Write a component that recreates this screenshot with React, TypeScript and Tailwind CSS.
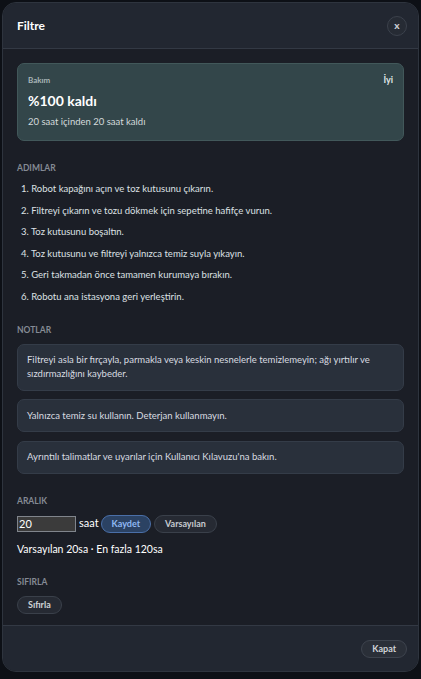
import React from "react";

const steps = [
  "Robot kapağını açın ve toz kutusunu çıkarın.",
  "Filtreyi çıkarın ve tozu dökmek için sepetine hafifçe vurun.",
  "Toz kutusunu boşaltın.",
  "Toz kutusunu ve filtreyi yalnızca temiz suyla yıkayın.",
  "Geri takmadan önce tamamen kurumaya bırakın.",
  "Robotu ana istasyona geri yerleştirin.",
];

const notes = [
  "Filtreyi asla bir fırçayla, parmakla veya keskin nesnelerle temizlemeyin; ağı yırtılır ve sızdırmazlığını kaybeder.",
  "Yalnızca temiz su kullanın. Deterjan kullanmayın.",
  "Ayrıntılı talimatlar ve uyarılar için Kullanıcı Kılavuzu'na bakın.",
];

function SectionLabel({ children }: { children: React.ReactNode }) {
  return (
    <div className="text-[8.5px] font-bold uppercase leading-[12px] text-[#858b94]">
      {children}
    </div>
  );
}

function PillButton({
  children,
  className = "",
}: {
  children: React.ReactNode;
  className?: string;
}) {
  return (
    <button
      className={
        "flex h-[18px] items-center rounded-full border px-[10px] text-[9px] font-bold leading-none " +
        className
      }
    >
      {children}
    </button>
  );
}

export default function App() {
  return (
    <div
      className="h-[679px] w-[421px] overflow-hidden bg-[#0d1016] px-[2px] pt-[2px]"
      style={{ fontFamily: 'Lato, "Noto Sans", sans-serif' }}
    >
      <div className="flex h-[670px] flex-col overflow-hidden rounded-[14px] border border-[#2e343e] bg-[#1b1e26] text-[#e6e8eb]">
        {/* header */}
        <div className="flex h-[46px] shrink-0 items-center justify-between border-b border-[#333944] bg-[#222731] pl-[14px] pr-[11px]">
          <div className="text-[12px] font-bold text-white">Filtre</div>
          <button className="flex h-[20px] w-[20px] items-center justify-center rounded-full border border-[#3c424c] bg-[#262b34] pb-[1px] text-[10px] font-black leading-none text-[#c9ccd1]">
            x
          </button>
        </div>

        {/* body */}
        <div className="flex flex-1 flex-col px-[14px] pt-[14px]">
          <div className="rounded-[7px] border border-[#42585a] bg-[#33464a] px-[10px] pb-[11px] pt-[10px]">
            <div className="flex items-center justify-between font-bold leading-[12px]">
              <span className="text-[8px] text-[#a9b6b8]">Bakım</span>
              <span className="text-[9px] text-[#dfe5e6]">İyi</span>
            </div>
            <div className="mt-[6px] text-[14px] font-bold leading-[18px] text-white">
              %100 kaldı
            </div>
            <div className="mt-[5px] text-[9.5px] leading-[14px] text-[#d3dadb]">
              20 saat içinden 20 saat kaldı
            </div>
          </div>

          <div className="mt-[21px]">
            <SectionLabel>Adımlar</SectionLabel>
            <ol className="mt-[8px] flex flex-col gap-[7.5px] pl-[4px] text-[9.5px] leading-[14px] text-[#dde0e4]">
              {steps.map((s, i) => (
                <li key={i}>
                  {i + 1}. {s}
                </li>
              ))}
            </ol>
          </div>

          <div className="mt-[20px]">
            <SectionLabel>Notlar</SectionLabel>
            <div className="mt-[8px] flex flex-col gap-[8.5px]">
              {notes.map((n, i) => (
                <div
                  key={i}
                  className="rounded-[7px] border border-[#343c48] bg-[#29303b] px-[9px] py-[8.5px] text-[9.5px] leading-[14px] text-[#d8dbe0]"
                >
                  {n}
                </div>
              ))}
            </div>
          </div>

          <div className="mt-[21px]">
            <SectionLabel>Aralık</SectionLabel>
            <div className="mt-[8px] flex h-[18px] items-center gap-[3px]">
              <input
                defaultValue="20"
                className="h-[16px] w-[59px] border border-[#80858c] bg-[#3b3b3b] px-[1px] text-[11px] leading-none text-white outline-none"
              />
              <span className="mr-[-1px] text-[11px] text-white">saat</span>
              <PillButton className="border-[#4a6fa8] bg-[#2b4263] text-[#8fb8f4]">
                Kaydet
              </PillButton>
              <PillButton className="border-[#3a404a] bg-[#262a33] text-[#c5c9cf]">
                Varsayılan
              </PillButton>
            </div>
            <div className="mt-[8px] text-[10.5px] leading-[16px] text-white">
              Varsayılan 20sa · En fazla 120sa
            </div>
          </div>

          <div className="mt-[19px]">
            <SectionLabel>Sıfırla</SectionLabel>
            <div className="mt-[8px] flex">
              <PillButton className="border-[#3a404a] bg-[#262a33] text-[#d0d3d8]">
                Sıfırla
              </PillButton>
            </div>
          </div>
        </div>

        {/* footer */}
        <div className="flex h-[46px] shrink-0 items-center justify-end border-t border-[#333944] bg-[#222731] px-[11px]">
          <PillButton className="border-[#3e444e] bg-[#2a2f38] text-[#d0d3d8]">
            Kapat
          </PillButton>
        </div>
      </div>
    </div>
  );
}
